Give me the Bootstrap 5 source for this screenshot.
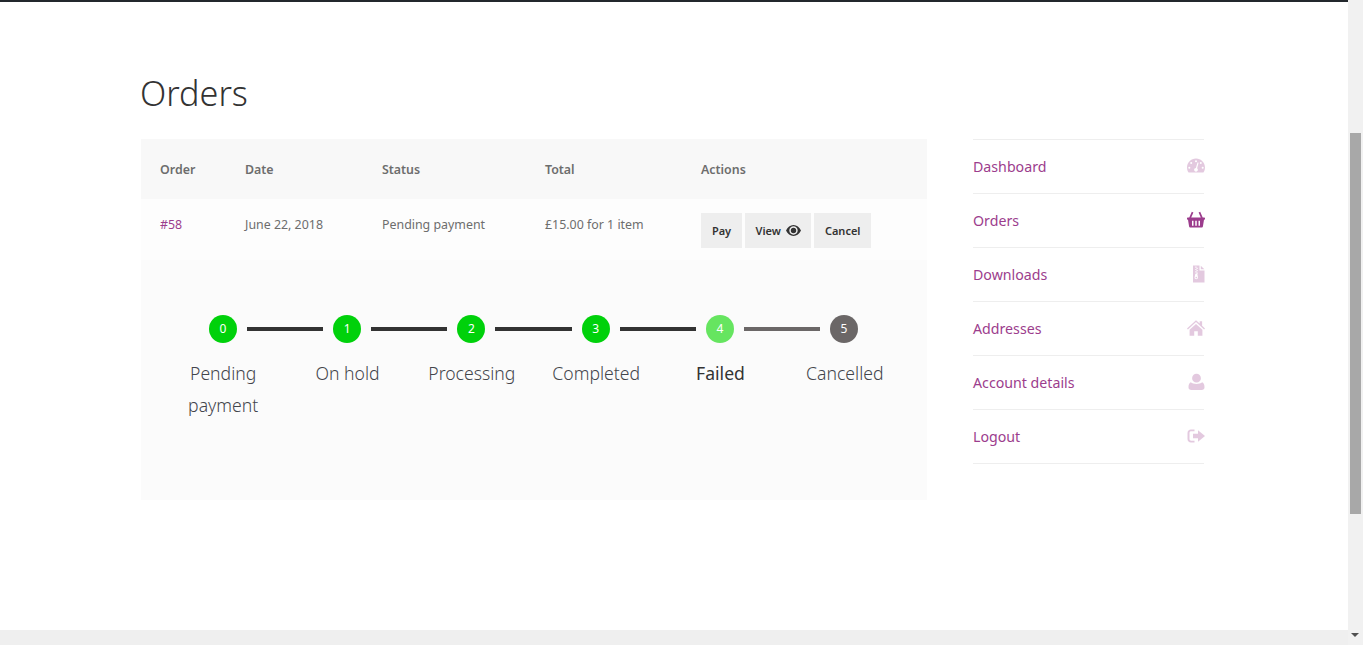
<!DOCTYPE html>
<html lang="en">
<head>
<meta charset="utf-8">
<title>Orders</title>
<link href="https://cdn.jsdelivr.net/npm/bootstrap@5.3.0/dist/css/bootstrap.min.css" rel="stylesheet">
<style>
html, body { height: 645px; overflow: hidden; }
body { font-family: "Noto Sans", "Liberation Sans", sans-serif; font-size: 12.4px; color: #6d6d6d; background: #fff; }
.shell { height: 645px; }
.pagearea { width: 1348px; border-top: 2px solid #23282d; }
.wrapbox { width: 1063px; margin-left: 141px; }
.pagetitle { font-size: 34.200px; font-weight: 300; color: #333; line-height: 46px; margin: 68px 0 0 -1px; height: 69px; }
.primarycol { width: 786px; }
.sidecol { width: 231px; }
.orderhead, .orderrow { display: grid; grid-template-columns: 85px 137px 163px 156px 245px; }
.orderhead { height: 60px; background: #f8f8f8; font-weight: 600; align-items: center; color: #6d6d6d; padding-top: 2px; }
.orderhead > div, .orderrow > div { padding-left: 19px; }
.orderrow { height: 61px; background: #fdfdfd; padding-top: 17px; }
.orderid { color: #9c3d8d; text-decoration: none; }
.actgroup { gap: 3px; }
.actbtn { background: #eee; color: #333; font-weight: 600; font-size: 11px; height: 35px; min-width: 41px; border: 0; border-radius: 0; padding: 1px 10.500px 0; margin-top: -3px; justify-content: center; }
.actbtn:hover { background: #ddd; color: #333; }
.actbtn svg { width: 15px; height: 11px; margin-left: 5px; margin-top: -1px; }
.trackarea { height: 240px; background: #fbfbfb; padding: 55px 20px 0; }
.trackline { padding: 0 49px 0 48px; }
.dotstep { width: 28px; height: 28px; border-radius: 50%; background: #00d10b; color: #fff; font-size: 12px; line-height: 28px; text-align: center; flex: none; }
.dotstep.fadedstep { background: #66e560; }
.dotstep.greystep { background: #6b6767; }
.linkbar { flex: 1; height: 4px; margin: 0 10px; background: #333; }
.linkbar.greybar { background: #6b6767; }
.tracklabels { display: grid; grid-template-columns: repeat(6, 1fr); margin-top: 14px; }
.tracklabels > div { font-size: 17.600px; font-weight: 300; line-height: 32px; text-align: center; color: #43454b; }
.tracklabels > div.curlabel { font-weight: 400; color: #333; }
.sidelist { border-top: 1px solid #eee; }
.sidelist a { height: 54px; border-bottom: 1px solid #eee; color: #9c3d8d; font-size: 14.200px; text-decoration: none; }
.sidelist svg { width: 18px; height: 18px; fill: #9c3d8d; opacity: .27; margin-top: -2px; margin-right: -1px; }
.sidelist a.activeitem svg { opacity: 1; }
.footstrip { height: 15px; background: #efefef; margin-top: auto; }
.fakebar { width: 15px; background: #f1f1f1; }
.fakethumb { width: 11px; height: 381px; margin: 133px 0 0 2px; background: #a8a8a8; }
.fakearrow { width: 0; height: 0; border-left: 4px solid transparent; border-right: 4px solid transparent; border-top: 4px solid #505050; margin: 119px 0 0 3px; }
</style>
</head>
<body>
<div class="shell d-flex">
  <div class="pagearea d-flex flex-column">
    <div class="wrapbox">
      <h1 class="pagetitle">Orders</h1>
      <div class="d-flex justify-content-between">
        <div class="primarycol">
          <div class="orderhead"><div>Order</div><div>Date</div><div>Status</div><div>Total</div><div>Actions</div></div>
          <div class="orderrow">
            <div><a class="orderid" href="#">#58</a></div>
            <div>June 22, 2018</div>
            <div>Pending payment</div>
            <div>£15.00 for 1 item</div>
            <div class="d-flex actgroup align-items-start">
              <a class="btn actbtn d-flex align-items-center" href="#">Pay</a>
              <a class="btn actbtn d-flex align-items-center" href="#">View
                <svg viewBox="0 0 15 11"><path fill-rule="evenodd" fill="#333" d="M7.500 0C4.200 0 1.600 2.200 0 5.500 1.600 8.800 4.200 11 7.500 11s5.900-2.200 7.500-5.500C13.400 2.200 10.800 0 7.500 0zM7.500 9.700C5.200 9.700 3.300 7.800 3.300 5.500S5.200 1.300 7.500 1.300s4.200 1.900 4.200 4.200-1.900 4.200-4.200 4.200zM7.500 2.800a2.700 2.700 0 1 0 0 5.400 2.700 2.700 0 0 0 0-5.400z"/></svg>
              </a>
              <a class="btn actbtn d-flex align-items-center" href="#">Cancel</a>
            </div>
          </div>
          <div class="trackarea">
            <div class="trackline d-flex align-items-center">
              <div class="dotstep">0</div><div class="linkbar"></div>
              <div class="dotstep">1</div><div class="linkbar"></div>
              <div class="dotstep">2</div><div class="linkbar"></div>
              <div class="dotstep">3</div><div class="linkbar"></div>
              <div class="dotstep fadedstep">4</div><div class="linkbar greybar"></div>
              <div class="dotstep greystep">5</div>
            </div>
            <div class="tracklabels">
              <div>Pending<br>payment</div><div>On hold</div><div>Processing</div><div>Completed</div><div class="curlabel">Failed</div><div>Cancelled</div>
            </div>
          </div>
        </div>
        <nav class="sidecol">
          <div class="sidelist">
            <a href="#" class="d-flex align-items-center justify-content-between">Dashboard
              <svg viewBox="0 0 18 18"><path fill-rule="evenodd" d="M9 1.500C4 1.500 0 5.500 0 10.500c0 2 .6 3.700 1.600 5h14.800c1-1.300 1.600-3 1.600-5C18 5.500 14 1.500 9 1.500zM9 3.200a1 1 0 1 1 0 2 1 1 0 0 1 0-2zM4.200 5.100a1 1 0 1 1 0 2 1 1 0 0 1 0-2zM13.800 5.100a1 1 0 1 1 0 2 1 1 0 0 1 0-2zM2.300 9.700a1 1 0 1 1 0 2 1 1 0 0 1 0-2zM15.700 9.700a1 1 0 1 1 0 2 1 1 0 0 1 0-2zM11.600 5.800l-1.500 5.400c.5.400.8 1 .8 1.600 0 1.100-.9 1.900-1.900 1.900S7.100 13.900 7.100 12.800c0-1 .8-1.800 1.800-1.900l1.600-5.400z"/></svg></a>
            <a href="#" class="activeitem d-flex align-items-center justify-content-between">Orders
              <svg viewBox="0 0 18 18"><path fill-rule="evenodd" d="M4.800.800l1.600.8L4.200 6.400h9.600L11.600 1.600l1.600-.8 2.500 5.600h1.600c.4 0 .7.3.7.7v1c0 .4-.3.7-.7.7h-.3l-1.100 6.800c-.1.500-.5.900-1 .9H3.100c-.5 0-.9-.4-1-.9L1 8.800H.7c-.4 0-.7-.3-.7-.7v-1c0-.4.300-.7.700-.7h1.600zM5 9.700h1.500v5H5zM8.250 9.700h1.500v5h-1.500zM11.500 9.700H13v5h-1.500z"/></svg></a>
            <a href="#" class="d-flex align-items-center justify-content-between">Downloads
              <svg viewBox="0 0 18 18"><path fill-rule="evenodd" d="M6 .500h6.500v5H17.500V17.500H6zM13.800.700l3.500 3.500h-3.500zM9.500 1.500H8.300v1.200h1.200zM10.700 2.700H9.500v1.200h1.200zM9.500 3.900H8.300v1.200h1.200zM10.700 5.100H9.500v1.200h1.200zM9.500 6.300H8.300v1.200h1.200zM10.700 7.500H9.500v1.200h1.200zM9.500 8.700H8.300l-.7 3.800c0 1 .8 1.700 1.700 1.700s1.700-.7 1.700-1.700l-.7-3.800zM9.300 11.800c.5 0 .9.400.9.800s-.4.800-.9.800-.9-.4-.9-.8.400-.8.900-.8z"/></svg></a>
            <a href="#" class="d-flex align-items-center justify-content-between">Addresses
              <svg viewBox="0 0 18 18"><path d="M9 1.200l3.700 3.400V2.300h2.400v4.500L18 9.500l-.9 1L9 3.100.9 10.500 0 9.500zM9 5l6.400 5.800v6H10.800v-4.500H7.200v4.500H2.600v-6z"/></svg></a>
            <a href="#" class="d-flex align-items-center justify-content-between">Account details
              <svg viewBox="0 0 18 18"><path d="M9.500.800a4.400 4.400 0 0 1 0 8.800 4.400 4.400 0 0 1 0-8.800zM3.800 9.300c1.300 1.200 3.300 1.700 5.700 1.700s4.400-.5 5.700-1.700c1.500.5 2.300 2.400 2.300 4.900 0 1.800-1.100 2.800-2.800 2.800H4.300c-1.700 0-2.800-1-2.800-2.800 0-2.500.8-4.400 2.300-4.900z"/></svg></a>
            <a href="#" class="d-flex align-items-center justify-content-between">Logout
              <svg viewBox="0 0 18 18"><path fill-rule="evenodd" d="M4 2.500h3.500v1.700H4.200c-1 0-1.700.7-1.700 1.700v6.200c0 1 .7 1.700 1.700 1.700h3.300v1.700H4c-2 0-3.500-1.500-3.500-3.500V6c0-2 1.500-3.500 3.500-3.500zM11 3.200L18 9l-7 5.800v-3.500H6V6.700h5z"/></svg></a>
          </div>
        </nav>
      </div>
    </div>
    <div class="footstrip"></div>
  </div>
  <div class="fakebar">
    <div class="fakethumb"></div>
    <div class="fakearrow"></div>
  </div>
</div>
<script src="https://cdn.jsdelivr.net/npm/bootstrap@5.3.0/dist/js/bootstrap.bundle.min.js"></script>
</body>
</html>
